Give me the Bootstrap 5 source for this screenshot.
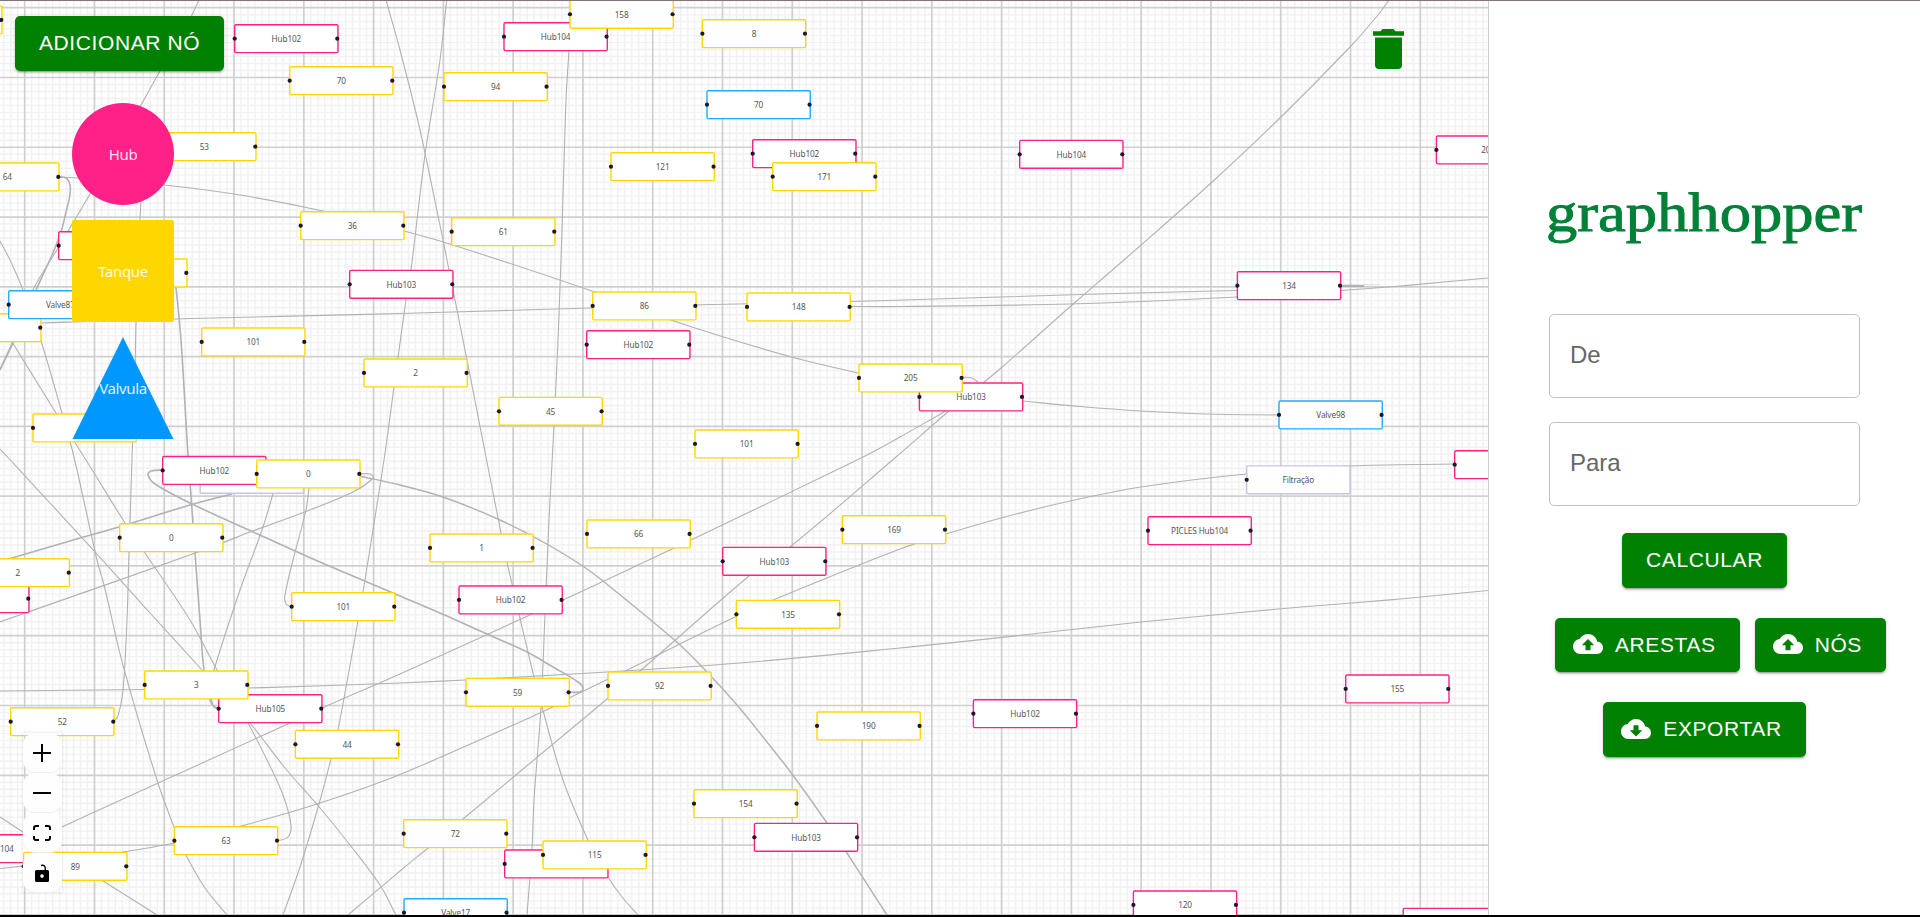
<!DOCTYPE html>
<html lang="pt-BR">
<head>
<meta charset="utf-8">
<meta name="viewport" content="width=device-width, initial-scale=1">
<title>Graphhopper</title>
<link href="https://cdn.jsdelivr.net/npm/bootstrap@5.3.0/dist/css/bootstrap.min.css" rel="stylesheet">
<style>
  body { height: 917px; border-top: 1px solid #80767a; border-bottom: 2px solid #000; font-family: "Liberation Sans", Arial, sans-serif; }
  .board { width: 1489px; border-right: 1px solid #ccc; background: #fefefe; }
  .board-layer { position: absolute; left: 0; top: -1px; width: 1488px; height: 916px; }
  .flow-node { position: absolute; left: 0; top: 0; width: 150px; height: 42px; border: 2px solid #ffd700; border-radius: 3px; background: #fff; transform-origin: 0 0;
    font: 11.8px/38px "Noto Sans", sans-serif; letter-spacing: -.2px; color: #555; text-align: center; white-space: nowrap; }
  .flow-node::before, .flow-node::after { content: ""; position: absolute; top: 16px; width: 6px; height: 6px; border-radius: 50%; background: #1a192b; }
  .flow-node::before { left: -4px; }
  .flow-node::after { right: -3px; }
  .flow-node.hub { border-color: #ff2088; }
  .flow-node.valve { border-color: #22aaff; }
  .flow-node.filter { border-color: #c9c3e6; }
  .flow-node.filter::after { display: none; }
  .btn-green { --bs-btn-bg: #008000; --bs-btn-color: #fff; --bs-btn-border-width: 0; --bs-btn-border-radius: 5px; --bs-btn-padding-x: 24px;
    --bs-btn-padding-y: 0; --bs-btn-hover-bg: #006b00; --bs-btn-hover-color: #fff; --bs-btn-font-size: 21px; height: 55px; line-height: 51px; letter-spacing: .6px; padding-bottom: 2px;
    box-shadow: 0 3px 1px -2px rgba(0,0,0,.2), 0 2px 2px rgba(0,0,0,.14), 0 1px 5px rgba(0,0,0,.12); }
  .btn-green.with-icon { --bs-btn-padding-x: 18px; padding-right: 24px; gap: 12px; }
  .palette { position: absolute; left: 15px; top: 15px; }
  .shape { width: 102px; height: 102px; margin-left: 57px; color: rgba(255,255,255,.88); font: 15px "Noto Sans", sans-serif; letter-spacing: -.35px; }
  .shape-hub { background: #ff2088; border-radius: 50%; margin-top: 32px; }
  .shape-tank { background: #ffd700; border-radius: 2px; margin-top: 15px; }
  .shape-valve { background: #0098ff; clip-path: polygon(50% 0, 99.5% 100%, .5% 100%); margin-top: 15px; }
  .trash { position: absolute; left: 1373px; top: 28px; }
  .zoom-bar { position: absolute; left: 23px; top: 732px; width: 39px; box-shadow: 0 0 2px 1px rgba(0,0,0,.08); }
  .zoom-bar button { height: 39px; margin-bottom: 1px; border: 0; padding: 0 1px 0 0; background: #fefefe; border-radius: 12px; box-shadow: 0 1px 1px #eee; }
  .zoom-bar button:last-child { margin-bottom: 0; }
  .side { padding: 182px 0 0; }
  .field { width: 311px; height: 84px; border-radius: 5px; border: 1px solid #c0c0c0; padding: 0 20px 2px; font-size: 24px; box-shadow: none; }
  .field::placeholder { color: #666; opacity: 1; }
</style>
</head>
<body class="d-flex overflow-hidden bg-white">
<main class="board position-relative flex-shrink-0 overflow-hidden">
  <svg class="board-layer" id="edges" fill="none"></svg>
  <div class="board-layer" id="nodes"></div>
  <div class="palette d-flex flex-column align-items-start">
    <button class="btn btn-green" type="button">ADICIONAR NÓ</button>
    <div class="shape shape-hub d-flex align-items-center justify-content-center">Hub</div>
    <div class="shape shape-tank d-flex align-items-center justify-content-center">Tanque</div>
    <div class="shape shape-valve d-flex align-items-center justify-content-center">Valvula</div>
  </div>
  <svg class="trash" width="31" height="40" viewBox="0 0 31 40" fill="#008000"><path d="M0 2.3H7.500L9.500 0H20.500L22.500 2.300H31V6.700H0ZM2 8.500H29V36Q29 40 25 40H6Q2 40 2 36Z"/></svg>
  <div class="zoom-bar d-flex flex-column">
    <button type="button" aria-label="Zoom in"><svg class="d-block mx-auto" width="18" height="18" stroke="#000" stroke-width="2"><path d="M0 9H18M9 0V18"/></svg></button>
    <button type="button" aria-label="Zoom out"><svg class="d-block mx-auto" width="18" height="18" stroke="#000" stroke-width="2"><path d="M0 9H18"/></svg></button>
    <button type="button" aria-label="Fit view"><svg class="d-block mx-auto" width="18" height="16" fill="none" stroke="#000" stroke-width="2"><path d="M1 5V3Q1 1 3 1H6M12 1H15Q17 1 17 3V5M17 11V13Q17 15 15 15H12M6 15H3Q1 15 1 13V11"/></svg></button>
    <button type="button" aria-label="Lock"><svg class="d-block mx-auto" width="14" height="18" viewBox="0 0 14 18"><path d="M6 1.500Q10.300 .2 10.300 5V7" fill="none" stroke="#000" stroke-width="1.400"/><path fill-rule="evenodd" d="M1.500 6H12.500Q14 6 14 7.500V16.500Q14 18 12.500 18H1.500Q0 18 0 16.500V7.500Q0 6 1.500 6ZM7 10.300A1.800 1.800 0 1 0 7 13.900A1.800 1.800 0 1 0 7 10.300Z"/></svg></button>
  </div>
</main>
<aside class="side flex-grow-1 d-flex flex-column align-items-center">
  <svg width="318" height="64" role="img" aria-label="graphhopper"><text x="0" y="47.500" textLength="316" lengthAdjust="spacingAndGlyphs" font-family="Liberation Serif, serif" font-size="54" fill="#008137" stroke="#008137" stroke-width=".9">graphhopper</text></svg>
  <input class="form-control field" style="margin-top:67px" placeholder="De" aria-label="De">
  <input class="form-control field mt-4" placeholder="Para" aria-label="Para">
  <button class="btn btn-green" style="margin-top:27px" type="button">CALCULAR</button>
  <div class="d-flex" style="margin:30px 0 0 32px;gap:15px">
    <button class="btn btn-green with-icon d-flex align-items-center" style="height:54px" type="button"><svg width="30" height="20" viewBox="0 4 24 16" fill="#fff"><path d="M19.350 10.040C18.670 6.590 15.640 4 12 4 9.110 4 6.600 5.640 5.350 8.040 2.340 8.360 0 10.910 0 14c0 3.310 2.690 6 6 6h13c2.760 0 5-2.240 5-5 0-2.640-2.050-4.780-4.650-4.960zM14 13v4h-4v-4H7l5-5 5 5h-3z"/></svg>ARESTAS</button>
    <button class="btn btn-green with-icon d-flex align-items-center" style="height:54px" type="button"><svg width="30" height="20" viewBox="0 4 24 16" fill="#fff"><path d="M19.350 10.040C18.670 6.590 15.640 4 12 4 9.110 4 6.600 5.640 5.350 8.040 2.340 8.360 0 10.910 0 14c0 3.310 2.690 6 6 6h13c2.760 0 5-2.240 5-5 0-2.640-2.050-4.780-4.650-4.960zM14 13v4h-4v-4H7l5-5 5 5h-3z"/></svg>NÓS</button>
  </div>
  <button class="btn btn-green with-icon d-flex align-items-center" style="margin-top:30px" type="button"><svg width="30" height="20" viewBox="0 4 24 16" fill="#fff"><path d="M19.350 10.040C18.670 6.590 15.640 4 12 4 9.110 4 6.600 5.640 5.350 8.040 2.340 8.360 0 10.910 0 14c0 3.310 2.690 6 6 6h13c2.760 0 5-2.240 5-5 0-2.640-2.050-4.780-4.650-4.960zM17 13l-5 5-5-5h3V9h4v4h3z"/></svg>EXPORTAR</button>
</aside>
<script src="https://cdn.jsdelivr.net/npm/bootstrap@5.3.0/dist/js/bootstrap.bundle.min.js"></script>
<script>
  // [type, x, y, label]; t = tank, h = hub, v = valve, f = filter
  const nodes = [
    ['t',-102,5.300,''],['h',234,24,'Hub102'],['t',289,66,'70'],['t',152,132,'53'],['t',-45,162.300,'64'],['h',58,231,''],['t',83,258.300,''],
    ['t',-63,313,''],['v',8,290,'Valve87'],['t',300,211,'36'],['h',349,269.700,'Hub103'],['t',201,327.300,'101'],['t',363.300,358.300,'2'],['t',32.300,413.300,''],
    ['f',199.500,464.700,''],['h',162,455.800,'Hub102'],['t',256,459.300,'0'],['t',119,523,'0'],['h',-75,584,''],['t',-34.500,558,'2'],['t',291,592,'101'],
    ['h',218,694,'Hub105'],['t',144,670.300,'3'],['t',10,707,'52'],['t',294.700,729.700,'44'],['t',173.700,826,'63'],['h',-53.500,834,'Hub104'],['t',23,851.700,'89'],
    ['h',503.300,22,'Hub104'],['t',569.300,-.4,'158'],['t',701.700,19,'8'],['t',443.300,72,'94'],['v',706.300,90,'70'],['h',752,139,'Hub102'],['t',772,162,'171'],
    ['t',610.300,152,'121'],['t',451,217,'61'],['t',592,291.300,'86'],['h',586,330,'Hub102'],['t',746.300,292.300,'148'],['t',498.300,396.700,'45'],['t',694.300,429.300,'101'],
    ['h',918.700,382.300,'Hub103'],['t',858.300,363.300,'205'],['t',429.300,533.300,'1'],['t',586.300,519.300,'66'],['h',722,546.700,'Hub103'],['t',841.700,515,'169'],
    ['h',458.300,585.300,'Hub102'],['t',735.700,599.700,'135'],['t',465.300,677.700,'59'],['t',607.300,671.300,'92'],['t',816.300,711.300,'190'],['t',693.300,789,'154'],
    ['h',753.700,822.700,'Hub103'],['t',403,819,'72'],['h',504,849.300,''],['t',542.300,840.300,'115'],['v',403.300,898,'Valve17'],['h',1019,139.700,'Hub104'],
    ['h',1236.700,271,'134'],['h',1435.700,135.300,'205'],['v',1278.300,400.300,'Valve98'],['h',1454,450,''],['f',1246,465.200,'Filtração'],['h',1147.300,516,'PICLES Hub104'],
    ['h',1345,674.300,'155'],['h',972.700,699,'Hub102'],['h',1132.700,890.300,'120'],['h',1402.500,907.700,'']
  ];
  const kinds = {t: '', h: ' hub', v: ' valve', f: ' filter'};
  const zoom = .6978;
  document.getElementById('nodes').innerHTML = nodes.map(([k, x, y, s]) =>
    `<div class="flow-node${kinds[k]}" style="transform:translate(${x}px,${y}px) scale(${zoom})">${s}</div>`).join('');

  // [stroke width, x1, y1, x2, y2, ...]
  const edges = [
    [1.100,199,0,185,29,160,71,141,105,90,194,58,248,33,290,12,343,0,369],
    [1.600,58,177,66,178,70,185,69.700,196,66,212,61,232,52,255,36,290,13,343,0,370],
    [1.100,58,177,78,178,164,185,240,195,323,211,404,231,453,245,592,291,671,320,740,342,803,360,858,373],
    [1.100,142,180,140,220,136,322,135,370,132.500,443,130,523,129,552,127,620,123,690,118,716,113,722],
    [1.100,0,241,11,262,23,290,41,341,62,413,74,457,97,560,104,585,123.500,667,157,780,174,827,186,855,205,888,227,915],
    [1.100,12.700,343,56,413,86,460,125,523,145,553,190,620,217,670,248,723,268,762,283,795,291,825,288,837,277,841],
    [1.100,0,449,50,503,96,553,150,613,202,670,250,723,285,768,320,808,350,845,380,885,396,915],
    [1.600,170,240,176,288,181,340,188,455,193,523,195,553,200,620,204,670,210,700,214,707,219,709],
    [1.100,273,494,262,530,240,590,214,670,210,690,213,705,219,709],
    [1.100,309,488,306,510,293,560,285,595,286,604,292,607],
    [1.200,359,474,370,474,373,478,353,492,300,513.700,250,532,223,542.700,195,553,128,577,28,612,0,622],
    [1.400,359,476,400,485,443,497,500,520,546.700,544,582.700,566,603,581,676.700,642,706,671,737,705,763,737,792,774,827,823,847,853,887,915],
    [1.600,163,470,151,471,148,475,155,484,192,504,262,536,313,559,400,596,440,613,487,634,527,652,553,667,578,682,583,688,580,692,568,692],
    [1.600,232,494,190,505,119,527,70,541,12,558,-20,567],
    [1.100,0,691,144,689.500,248,688,400,683,465,680,607,672,740,663,900,648,1000,637.600,1141,622,1290,608,1400,599,1488,590.500],
    [1.100,41,323,72,322,174,319,400,313.500,592,308,695,305,850,301.500,1100,294,1237,290.500,1300,289,1341,287.500],
    [1.100,850,306.500,900,306.500,1070,304,1237,297,1341,290.500,1400,286,1488,278],
    [2,1341,286,1364,286],[.4,1341,284.800,1380,284.800],
    [1.100,1389,0,1378,15,1350,47,1281,117,1211,183,1140,246,1072,305,1001,368,949,411,896,457,790,547,755,571,640,671,607,699,463,819,428,848,400,871,348,915],
    [1.100,984,390,946,411,900,437,863,457,691,540,563,600,532,614,400,674,322,708,290,723,62,827,23,846],
    [1.100,962,377,972,378,978,382],
    [1.100,1022,401,1080,406.500,1141,411,1206,414,1278,415],
    [1.100,1455,464,1350,466,1246,474,1141,487,1070,501,1001,518,946,534,900,549,773,600,735,617,625,671,569,698,553,707,400,774.500,320,803,245,825,174,843,123,852,23,866,0,868.500],
    [1.100,0,817,23,832,103,881,157,915],
    [1.100,446.700,0,440,60,425,155,411,270,406,300,394,387,384,460,363,592,358,621,338,730,331,759,319,804,300,867,283,915],
    [1.100,386,0,400,50,417,117,425,153,443,240,449,270,454,295,467,360,486,457,501,533,507,562,519,614,534,677,542,707,563,780,588,840,608,877,622,897,638,915],
    [1.100,569,50,566,100,562,230,558,340,554,425,549,520,545,614,541,707,534,800,532,849,527,915]
  ];
  // Smooth curve through a list of points (Catmull-Rom to cubic Bézier)
  const curve = p => {
    const n = p.length / 2, at = i => { i = Math.max(0, Math.min(n - 1, i)); return [p[2 * i], p[2 * i + 1]]; };
    let d = `M${p[0]} ${p[1]}`;
    for (let i = 0; i < n - 1; i++) {
      const a = at(i - 1), b = at(i), c = at(i + 1), e = at(i + 2);
      const len = Math.hypot(c[0] - b[0], c[1] - b[1]);
      const tan = (u, v) => { const l = Math.hypot(v[0] - u[0], v[1] - u[1]) || 1; return [(v[0] - u[0]) / l * len / 3, (v[1] - u[1]) / l * len / 3]; };
      const s = tan(a, c), t = tan(b, e);
      d += `C${b[0] + s[0]} ${b[1] + s[1]} ${c[0] - t[0]} ${c[1] - t[1]} ${c[0]} ${c[1]}`;
    }
    return d;
  };
  const step = 6.978;
  let minor = '', major = '';
  for (let i = -3; i < 211; i++) { const l = `M${24.700 + i * step} 0V916`; i % 10 ? minor += l : major += l; }
  for (let i = -1; i < 131; i++) { const l = `M0 ${7.700 + i * step}H1488`; i % 10 ? minor += l : major += l; }
  document.getElementById('edges').innerHTML =
    `<path d="${minor}" stroke="#f1f1f1" stroke-width="1.400"/><path d="${major}" stroke="#cfcfcf" stroke-width="1.700"/>` +
    edges.map(([w, ...p]) => `<path d="${curve(p)}" stroke="#b1b1b7" stroke-width="${w}"/>`).join('');
</script>
</body>
</html>
